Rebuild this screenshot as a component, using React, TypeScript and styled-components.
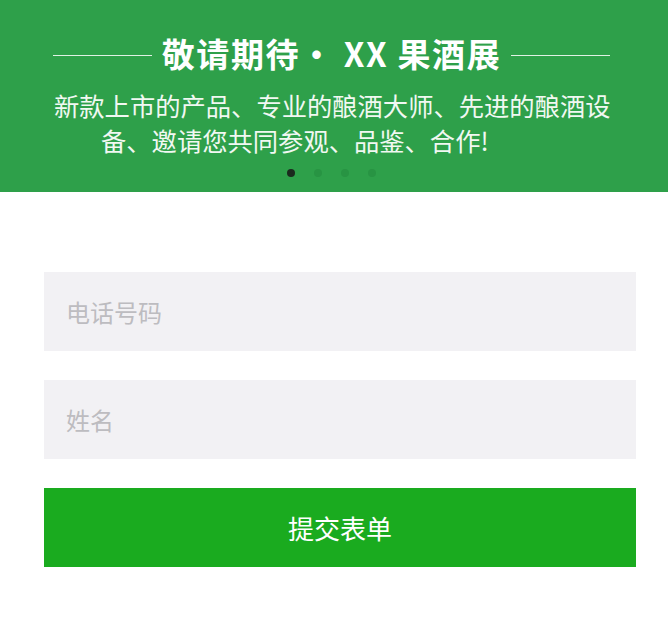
import React from "react"
import styled, { createGlobalStyle } from "styled-components"

const GlobalStyle = createGlobalStyle`
  html, body {
    margin: 0;
    padding: 0;
    background: #ffffff;
    font-family: "Noto Sans CJK SC", "Noto Sans", sans-serif;
  }
`

const slides = [0, 1, 2, 3]
const ACTIVE_SLIDE = 0

const App: React.FC = () => {
  return (
    <>
      <GlobalStyle />
      <Page>
        <Banner>
          <TitleRow>
            <Rule />
            <Title>敬请期待· XX 果酒展</Title>
            <Rule />
          </TitleRow>
          <Intro>新款上市的产品、专业的酿酒大师、先进的酿酒设</Intro>
          <Intro $indent>备、邀请您共同参观、品鉴、合作!</Intro>
          <Dots>
            {slides.map(i => (
              <Dot key={i} $active={i === ACTIVE_SLIDE} />
            ))}
          </Dots>
        </Banner>
        <Form>
          <Field placeholder="电话号码" type="tel" />
          <Field placeholder="姓名" />
          <Submit type="button">提交表单</Submit>
        </Form>
      </Page>
    </>
  )
}

const Page = styled.div`
  width: 668px;
  min-height: 620px;
  background: #ffffff;
`

const Banner = styled.div`
  height: 192px;
  box-sizing: border-box;
  padding: 33px 58px 0 53px;
  background-color: #2ea04a;
  color: #ffffff;
`

const TitleRow = styled.div`
  display: flex;
  align-items: center;
  gap: 10px;
`

const Rule = styled.div`
  flex: 1;
  height: 1px;
  margin-top: 4px;
  background-color: rgba(255, 255, 255, 0.85);
`

const Title = styled.h1`
  margin: 0;
  font-size: 33px;
  line-height: 40px;
  font-weight: 700;
  letter-spacing: 1.6px;
  white-space: pre;
`

const Intro = styled.p<{ $indent?: boolean }>`
  margin: 0;
  padding-left: ${({ $indent }) => ($indent ? "48px" : "1px")};
  font-size: 25.3px;
  line-height: 35px;
  white-space: nowrap;
  color: #f1f8f2;

  &:first-of-type {
    margin-top: 15px;
  }
`

const Dots = styled.div`
  display: flex;
  gap: 19px;
  margin: 11px 0 0 234px;
`

const Dot = styled.span<{ $active: boolean }>`
  width: 8px;
  height: 8px;
  border-radius: 50%;
  background-color: ${({ $active }) => ($active ? "#1b2a1e" : "#289443")};
`

const Form = styled.form`
  display: flex;
  flex-direction: column;
  gap: 29px;
  padding: 80px 32px 0 44px;
`

const Field = styled.input`
  height: 79px;
  box-sizing: border-box;
  border: none;
  outline: none;
  padding: 0 22px;
  background-color: #f2f1f4;
  font-family: inherit;
  font-size: 24px;
  color: #333333;

  &::placeholder {
    color: #bdbcc0;
  }
`

const Submit = styled.button`
  height: 79px;
  border: none;
  background-color: #1aab1f;
  color: #ffffff;
  font-family: inherit;
  font-size: 26px;
  cursor: pointer;
`

export default App
